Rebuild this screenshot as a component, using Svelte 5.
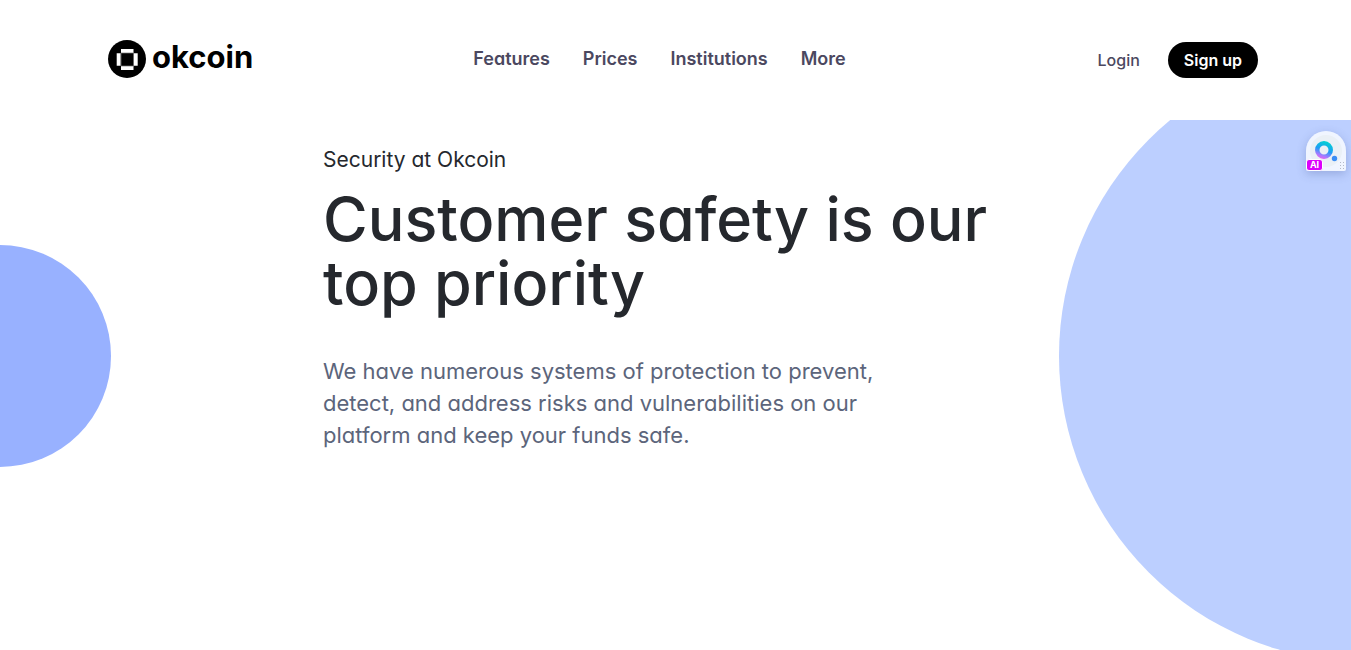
<script>
  const links = ['Features', 'Prices', 'Institutions', 'More'];
</script>

<div class="page">
  <header>
    <a class="brand" href="#home" aria-label="okcoin home">
      <svg viewBox="0 0 38 38" width="38" height="38" aria-hidden="true">
        <circle cx="19" cy="19" r="19" fill="#000" />
        <path d="M13 9h12.500v4H13zM13 26h12.500v4H13zM8.700 13.200h4v12.500h-4zM25.700 13.200h4v12.500h-4z" fill="#fff" />
        <path d="M13 13h12.500v13H13z" fill="none" stroke="#777" stroke-width="0.700" />
      </svg>
      <span>okcoin</span>
    </a>
    <nav aria-label="Main">
      {#each links as link}
        <a href="#{link.toLowerCase()}">{link}</a>
      {/each}
    </nav>
    <div class="account">
      <a class="login" href="#login">Login</a>
      <button type="button" class="signup">Sign up</button>
    </div>
  </header>

  <main>
    <div class="disc left"></div>
    <div class="disc right"></div>
    <section>
      <p class="eyebrow">Security at Okcoin</p>
      <h1>Customer safety is our<br />top priority</h1>
      <p class="lead">
        We have numerous systems of protection to prevent,<br />
        detect, and address risks and vulnerabilities on our<br />
        platform and keep your funds safe.
      </p>
    </section>
  </main>

  <button type="button" class="assistant" aria-label="AI assistant">
    <svg viewBox="0 0 40 40" width="40" height="40" aria-hidden="true">
      <defs>
        <linearGradient id="ring" x1="0.65" y1="0" x2="0.3" y2="1">
          <stop offset="0" stop-color="#00d5d0" />
          <stop offset="0.5" stop-color="#1f9cf5" />
          <stop offset="0.8" stop-color="#a77bff" />
          <stop offset="1" stop-color="#f45df0" />
        </linearGradient>
      </defs>
      <path d="M0 20a20 20 0 0 1 40 0v18a2 2 0 0 1-2 2H2a2 2 0 0 1-2-2z" fill="#f0f5ff" />
      <circle cx="20" cy="20" r="16" fill="#eaf0f6" />
      <path d="M18 10a9 9 0 1 0 0 18a9 9 0 1 0 0-18zM18 14.500a4.500 4.500 0 1 1 0 9a4.500 4.500 0 1 1 0-9z" fill="url(#ring)" fill-rule="evenodd" />
      <circle cx="28.500" cy="27.500" r="2.700" fill="#3b8df5" />
      <path d="M34 31h1v1h-1zM37 31h1v1h-1zM34 34h1v1h-1zM37 34h1v1h-1zM34 37h1v1h-1zM37 37h1v1h-1z" fill="#b4bac8" />
    </svg>
    <span>AI</span>
  </button>
</div>

<style>
  :global(body) {
    margin: 0;
    background: #fff;
  }

  .page {
    position: relative;
    display: flex;
    flex-direction: column;
    min-height: 100vh;
    overflow: hidden;
    font-family: Inter, 'Liberation Sans', sans-serif;
    font-feature-settings: 'cv11';
    color: #25282d;
  }

  header {
    display: flex;
    align-items: center;
    box-sizing: border-box;
    height: 120px;
    padding: 0 93px 2px 108px;
  }

  a {
    color: inherit;
    text-decoration: none;
  }

  button {
    border: 0;
    font: inherit;
    font-feature-settings: inherit;
    cursor: pointer;
  }

  .brand {
    display: flex;
    align-items: center;
    gap: 6px;
    color: #000;
    font-size: 31px;
    font-weight: 700;
    line-height: 36px;
  }

  .brand span {
    padding-bottom: 4px;
  }

  nav {
    display: flex;
    gap: 33px;
    margin-left: 220px;
    color: #4b4860;
    font-size: 18px;
    font-weight: 600;
    line-height: 24px;
  }

  .account {
    display: flex;
    align-items: center;
    gap: 28px;
    margin-left: auto;
    padding-top: 2px;
    font-size: 16px;
    font-weight: 500;
  }

  .login {
    color: #4b4860;
  }

  .signup {
    height: 36px;
    padding: 0 16px;
    border-radius: 18px;
    background: #000;
    color: #fff;
    font-weight: 600;
  }

  main {
    position: relative;
    flex: 1;
    overflow: hidden;
  }

  .disc {
    position: absolute;
    border-radius: 50%;
  }

  .left {
    top: 125px;
    left: -111px;
    width: 222px;
    height: 222px;
    background: #98b1ff;
  }

  .right {
    top: -70px;
    right: -320px;
    width: 612px;
    height: 612px;
    background: #bccfff;
  }

  section {
    position: relative;
    max-width: 705px;
    margin: 0 auto;
    padding-top: 24px;
  }

  .eyebrow {
    margin: 0;
    font-size: 21px;
    line-height: 32px;
  }

  h1 {
    margin: 11px 0 40px;
    font-size: 61px;
    font-weight: 500;
    line-height: 64px;
  }

  .lead {
    margin: 0;
    color: #5c657b;
    font-size: 22px;
    line-height: 32px;
  }

  .assistant {
    position: absolute;
    top: 131px;
    right: 5px;
    width: 40px;
    height: 40px;
    padding: 0;
    border-radius: 20px 20px 2px 2px;
    background: none;
    box-shadow: 0 3px 10px rgba(70, 90, 150, 0.3);
  }

  .assistant svg {
    display: block;
  }

  .assistant span {
    position: absolute;
    left: 0;
    bottom: 0;
    box-sizing: border-box;
    width: 17px;
    height: 12px;
    border: 1px solid #fff;
    border-radius: 3px;
    background: #dc00fb;
    color: #fff;
    font-size: 9px;
    font-weight: 700;
    line-height: 10px;
    text-align: center;
  }
</style>
